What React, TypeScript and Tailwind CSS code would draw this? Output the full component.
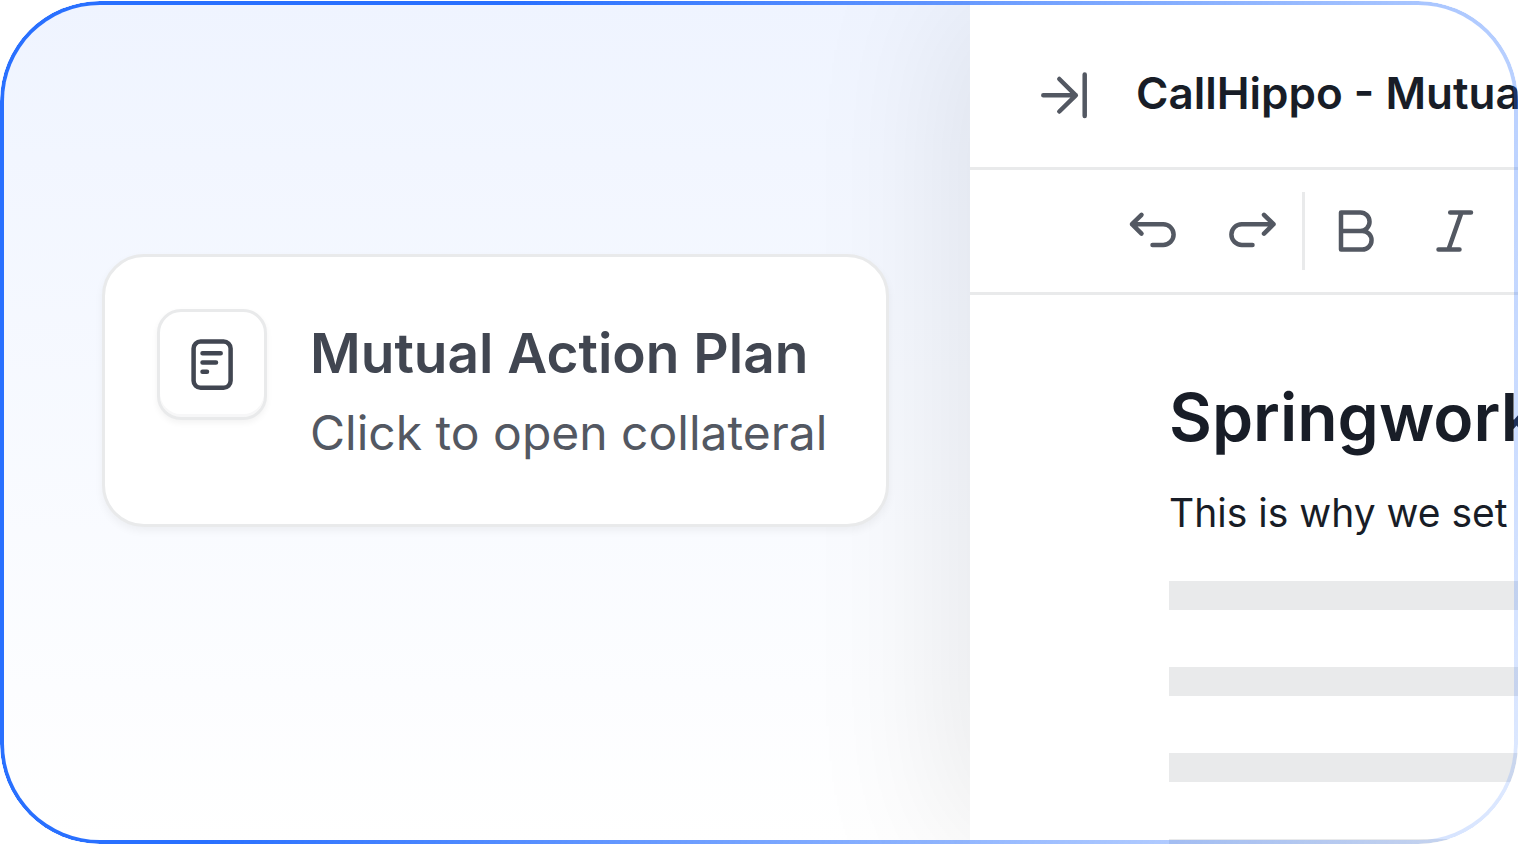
import React from 'react'

function CollapseIcon() {
  return (
    <svg viewBox="0 0 50 50" className="size-[50px]" fill="none" stroke="currentColor" strokeWidth="4.5" strokeLinecap="round" strokeLinejoin="round" aria-hidden="true">
      <path d="M3.3 25.3H35.8M19.3 9L35.8 25.3L19.3 41.5M44.7 4.5V46" />
    </svg>
  )
}

function UndoIcon() {
  return (
    <svg viewBox="0 0 50 50" className="size-[50px]" fill="none" stroke="currentColor" strokeWidth="4.5" strokeLinecap="round" strokeLinejoin="round" aria-hidden="true">
      <path d="M13.5 7.8L4 17.2L13.5 26.7M4 17.2H35.2A10.3 10.3 0 0 1 35.2 38H24.5" />
    </svg>
  )
}

function RedoIcon() {
  return (
    <svg viewBox="0 0 50 50" className="size-[50px]" fill="none" stroke="currentColor" strokeWidth="4.5" strokeLinecap="round" strokeLinejoin="round" aria-hidden="true">
      <path d="M36 7.8L45.5 17.2L36 26.7M45.5 17.2H13.8A10.3 10.3 0 0 0 13.8 38H24.5" />
    </svg>
  )
}

function BoldIcon() {
  return (
    <svg viewBox="0 0 50 50" className="size-[50px]" fill="none" stroke="currentColor" strokeWidth="4.5" strokeLinecap="round" strokeLinejoin="round" aria-hidden="true">
      <path d="M10 5.5H29.3A9.2 9.2 0 0 1 29.3 24H10ZM10 24H31.3A9.25 9.25 0 0 1 31.3 42.5H10Z" />
    </svg>
  )
}

function ItalicIcon() {
  return (
    <svg viewBox="0 0 50 50" className="size-[50px]" fill="none" stroke="currentColor" strokeWidth="4.5" strokeLinecap="round" strokeLinejoin="round" aria-hidden="true">
      <path d="M19.2 5.5H40M7.5 42.5H28.5M30.5 5.5L17.5 42.5" />
    </svg>
  )
}

function NoteIcon() {
  return (
    <svg viewBox="0 0 56 56" className="size-14" fill="none" stroke="currentColor" strokeWidth="4.5" strokeLinecap="round" strokeLinejoin="round" aria-hidden="true">
      <rect x="9.6" y="4.6" width="37" height="46.2" rx="7" />
      <path d="M18.5 16.2H36.7M18.5 25.5H32M18.5 34.7H23" />
    </svg>
  )
}

function CollateralCard() {
  return (
    <button
      type="button"
      className="flex w-full items-start gap-[43px] rounded-[42px] border-3 border-[#e9eaeb] bg-white pt-[52px] pb-[55px] pl-[52px] text-left shadow-[0_4px_8px_rgba(10,13,18,0.05)]"
    >
      <span className="flex h-[111px] w-[110px] shrink-0 items-center justify-center rounded-3xl border-3 border-[#e9eaeb] bg-white text-[#414651] shadow-[0_3px_6px_rgba(10,13,18,0.05),inset_0_-3px_0_rgba(10,13,18,0.03)]">
        <NoteIcon />
      </span>
      <span className="flex flex-col whitespace-nowrap">
        <span className="text-[55px] leading-[88px] font-semibold text-[#414651]">Mutual Action Plan</span>
        <span className="text-[48px] leading-[72px] text-[#535862]">Click to open collateral</span>
      </span>
    </button>
  )
}

function ToolButton({ label, children }: { label: string; children: React.ReactNode }) {
  return (
    <button type="button" aria-label={label} className="shrink-0">
      {children}
    </button>
  )
}

function DocumentPanel() {
  return (
    <section className="relative flex min-w-0 flex-col bg-white whitespace-nowrap shadow-[-20px_0_140px_rgba(0,0,0,0.085)]">
      <header className="flex h-[169px] shrink-0 items-center gap-[46px] border-b-3 border-[#e9eaeb] pt-[22px] pl-[70px]">
        <button type="button" aria-label="Collapse panel" className="shrink-0 text-[#535862]">
          <CollapseIcon />
        </button>
        <h1 className="pb-1 text-[44px] leading-[60px] font-semibold text-[#181d27]">CallHippo - Mutua</h1>
      </header>
      <div className="flex h-[125px] shrink-0 items-center border-b-3 border-[#e9eaeb] pl-[158px] text-[#535862]">
        <div className="flex gap-[50px] pt-0.5">
          <ToolButton label="Undo"><UndoIcon /></ToolButton>
          <ToolButton label="Redo"><RedoIcon /></ToolButton>
        </div>
        <div className="mr-[26px] ml-6 h-[78px] w-[3px] shrink-0 bg-[#e9eaeb]" />
        <div className="flex gap-[50px] pt-0.5">
          <ToolButton label="Bold"><BoldIcon /></ToolButton>
          <ToolButton label="Italic"><ItalicIcon /></ToolButton>
        </div>
      </div>
      <div className="h-0 grow overflow-hidden pt-20 pl-[199px] text-[#181d27]">
        <h2 className="text-[66px] leading-[84px] font-semibold">Springwork</h2>
        <p className="mt-6 text-[39px] leading-[60px]">This is why we set</p>
        <div className="mt-[38px] flex flex-col gap-[57px]">
          <div className="h-[29px] bg-[#e9eaeb]" />
          <div className="h-[29px] bg-[#e9eaeb]" />
          <div className="h-[29px] bg-[#e9eaeb]" />
          <div className="h-[29px] bg-[#e9eaeb]" />
        </div>
      </div>
    </section>
  )
}

function App() {
  return (
    <div className="flex h-screen bg-white pt-px font-[Inter,sans-serif]">
      <main className="relative grid grow grid-cols-[minmax(0,970fr)_minmax(0,548fr)] overflow-hidden rounded-[100px] bg-linear-to-b from-[#eff4ff] to-white">
        <div className="relative z-10 pt-[253px] pr-[81px] pl-[102px]">
          <CollateralCard />
        </div>
        <DocumentPanel />
        {/* gradient outline, fades out towards the bottom right */}
        <div className="pointer-events-none absolute inset-0 z-20 rounded-[100px] bg-linear-110 from-[#2970ff] from-28% to-[#2970ff]/14 p-1 [mask:linear-gradient(#000_0_0)_content-box_exclude,linear-gradient(#000_0_0)]" />
      </main>
    </div>
  )
}

export default App
